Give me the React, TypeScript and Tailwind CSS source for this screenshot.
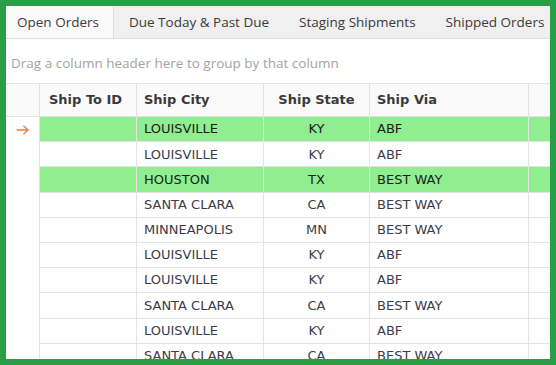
import React from 'react';

interface Row {
  city: string;
  state: string;
  via: string;
  hl?: boolean;
}

const rows: Row[] = [
  { city: 'LOUISVILLE', state: 'KY', via: 'ABF', hl: true },
  { city: 'LOUISVILLE', state: 'KY', via: 'ABF' },
  { city: 'HOUSTON', state: 'TX', via: 'BEST WAY', hl: true },
  { city: 'SANTA CLARA', state: 'CA', via: 'BEST WAY' },
  { city: 'MINNEAPOLIS', state: 'MN', via: 'BEST WAY' },
  { city: 'LOUISVILLE', state: 'KY', via: 'ABF' },
  { city: 'LOUISVILLE', state: 'KY', via: 'ABF' },
  { city: 'SANTA CLARA', state: 'CA', via: 'BEST WAY' },
  { city: 'LOUISVILLE', state: 'KY', via: 'ABF' },
  { city: 'SANTA CLARA', state: 'CA', via: 'BEST WAY' },
];

const tabs = ['Open Orders', 'Due Today & Past Due', 'Staging Shipments', 'Shipped Orders'];

function Arrow() {
  return (
    <svg width="13" height="10" viewBox="0 0 13 10" fill="none" stroke="#f27a3d" strokeWidth="1.3">
      <path d="M0.5 5h11.5M7.5 0.8L12 5l-4.5 4.2" />
    </svg>
  );
}

export default function App() {
  return (
    <div className="w-[556px] h-[365px] bg-[#2a9d47] p-[6px]">
      <div className="h-full bg-white flex flex-col overflow-hidden font-['Open_Sans',sans-serif]">
        {/* Tabs */}
        <div className="h-[33px] flex-shrink-0 flex bg-[#f0f0f0] border-b border-[#dedede] text-[13.5px] text-[#3a3a3a] whitespace-nowrap">
          {tabs.map((t, i) => (
            <div
              key={t}
              className={`flex items-center ${i === 0 ? 'bg-[#fafafa] border-r border-[#dcdcdc] pl-[11px] pr-[14px]' : 'px-[15px]'}`}
            >
              {t}
            </div>
          ))}
        </div>

        {/* Group panel */}
        <div className="h-[45px] flex-shrink-0 flex items-center pl-[5px] pt-[4px] border-b border-[#e2e2e2] text-[13.5px] text-[#a3a3a3] whitespace-nowrap">
          Drag a column header here to group by that column
        </div>

        {/* Header */}
        <div className="h-[33px] flex-shrink-0 flex bg-[#fafafa] border-b border-[#e2e2e2] font-['DejaVu_Sans',sans-serif] font-bold text-[13px] text-[#3a3a3a] whitespace-nowrap">
          <div className="w-[34px] border-r border-[#e2e2e2]" />
          <div className="w-[97px] border-r border-[#e2e2e2] flex items-center pl-[9px]">Ship To ID</div>
          <div className="w-[127px] border-r border-[#e2e2e2] flex items-center pl-[7px]">Ship City</div>
          <div className="w-[106px] border-r border-[#e2e2e2] flex items-center justify-center">Ship State</div>
          <div className="w-[159px] border-r border-[#e2e2e2] flex items-center pl-[7px]">Ship Via</div>
          <div className="flex-1" />
        </div>

        {/* Rows */}
        <div className="flex-1 overflow-hidden font-['DejaVu_Sans',sans-serif] text-[13px] whitespace-nowrap">
          {rows.map((r, i) => {
            const cell = `border-r border-b border-[#e4e4e4] flex items-center ${r.hl ? 'bg-[#90ee90] text-[#1a1a1a]' : 'text-[#3b3b4a]'}`;
            return (
              <div key={i} className="h-[25.2px] flex">
                <div className="w-[34px] border-r border-[#e2e2e2] flex items-center pl-[10px]">
                  {i === 0 && <Arrow />}
                </div>
                <div className={`w-[97px] ${cell}`} />
                <div className={`w-[127px] ${cell} pl-[7px]`}>{r.city}</div>
                <div className={`w-[106px] ${cell} justify-center`}>{r.state}</div>
                <div className={`w-[159px] ${cell} pl-[7px]`}>{r.via}</div>
                <div className={`flex-1 ${cell} border-r-0`} />
              </div>
            );
          })}
        </div>
      </div>
    </div>
  );
}
